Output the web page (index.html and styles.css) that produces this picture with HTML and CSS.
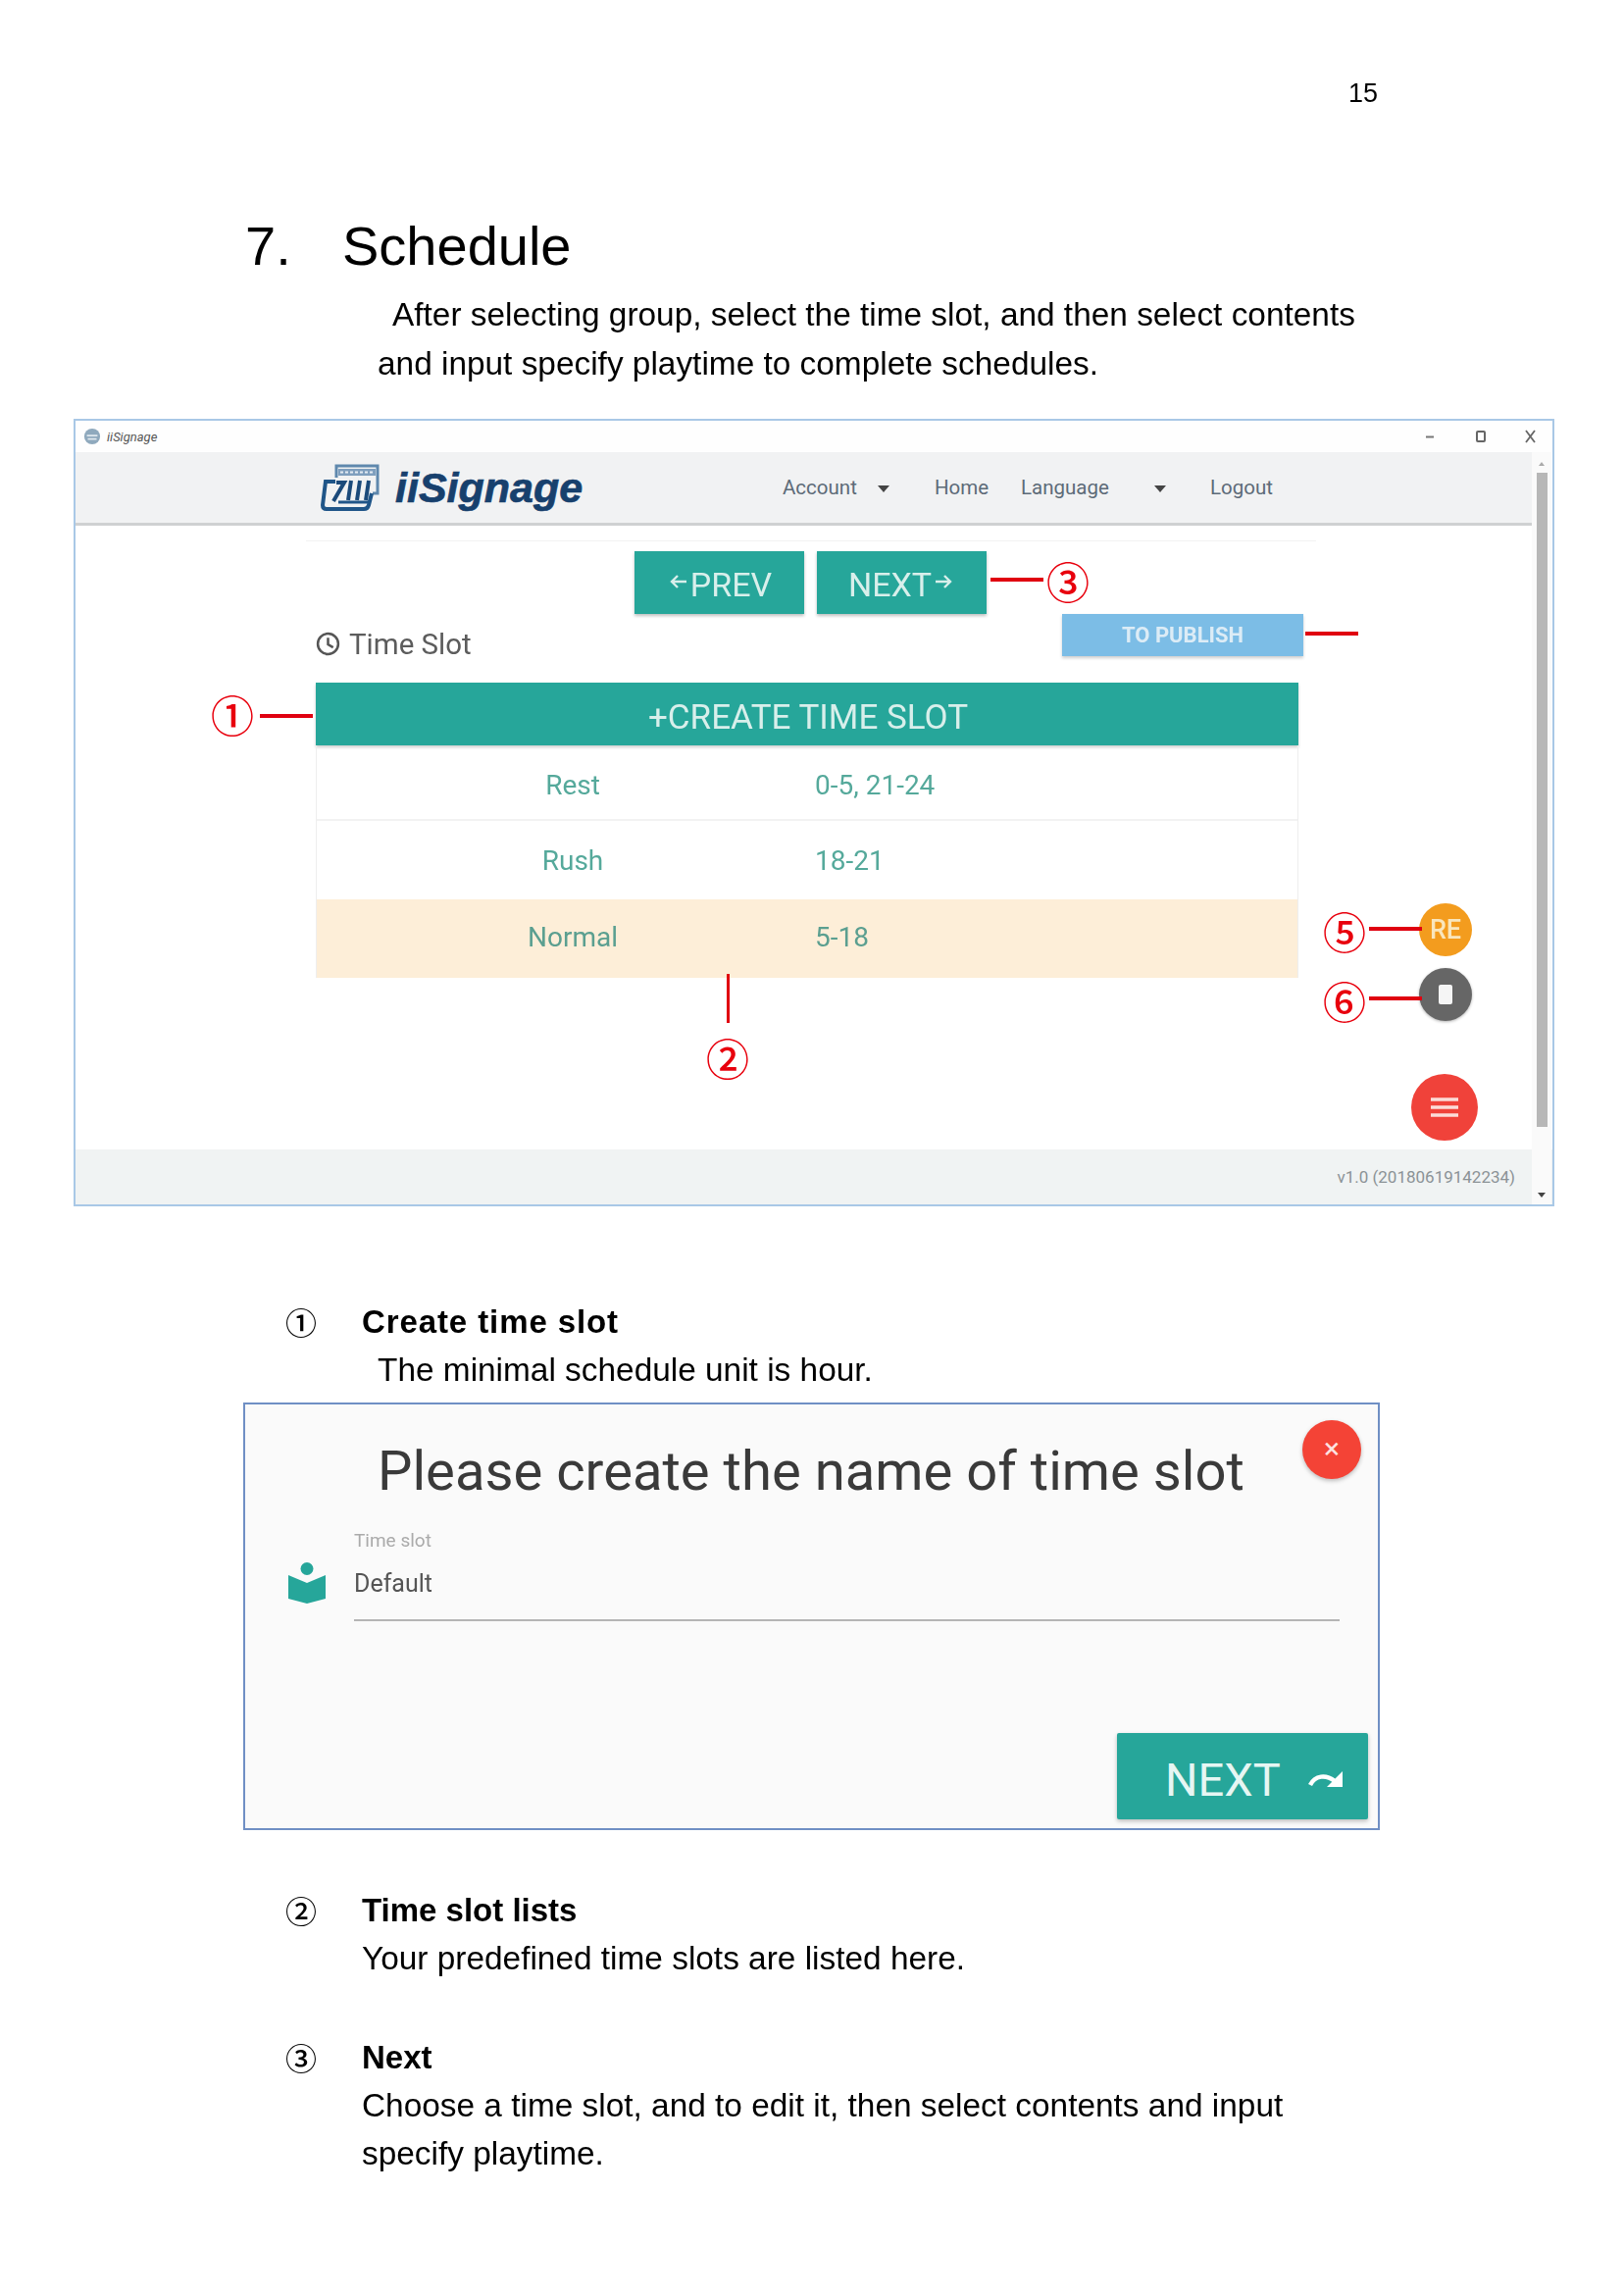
FILE: index.html
```html
<!DOCTYPE html>
<html lang="en">
<head>
<meta charset="utf-8">
<title>Schedule</title>
<link rel="stylesheet" href="styles.css">
</head>
<body>
<div class="page">
  <div class="pagenum">15</div>
  <h1 class="heading"><span class="heading-no">7.</span><span>Schedule</span></h1>
  <p class="intro"><span class="intro-first">After selecting group, select the time slot, and then select contents</span><br>and input specify playtime to complete schedules.</p>

  <div class="shot">
    <div class="app">
      <div class="titlebar">
        <svg class="tb-icon" viewBox="0 0 20 20"><circle cx="10" cy="10" r="9" fill="#8fa9bd"/><path d="M4 9h12M5 13h10" stroke="#dfe8ee" stroke-width="2"/></svg>
        <span class="tb-title">iiSignage</span>
        <div class="tb-controls">
          <svg class="tb-ctl" viewBox="0 0 16 16"><path d="M3 8.500h8" stroke="#777" stroke-width="2"/></svg>
          <svg class="tb-ctl" viewBox="0 0 16 16"><rect x="4" y="3" width="8" height="10" rx="1" fill="none" stroke="#666" stroke-width="2"/></svg>
          <svg class="tb-ctl" viewBox="0 0 16 16"><path d="M3 2l9 12M12 2L3 14" stroke="#666" stroke-width="1.800"/></svg>
        </div>
      </div>
      <div class="nav">
        <svg class="logo-mark" viewBox="0 0 60 48">
          <path d="M16 14V2h42v28h-5" fill="none" stroke="#5f88ad" stroke-width="3"/>
          <path d="M18 5h38v7H18z" fill="#7f9fbe"/>
          <path d="M20 8.500h34" stroke="#e3ebf2" stroke-width="2" stroke-dasharray="3 2"/>
          <path d="M15 18H5L2 42q0 4 4 4h38q4 0 5-4l3-12" fill="none" stroke="#1f5588" stroke-width="4"/>
          <path d="M13 38l11-19h-8M31 17l-3 20M40 17l-3 20M49 17l-3 20" fill="none" stroke="#1b4a7a" stroke-width="4"/>
          <path d="M18 39h30" stroke="#1f5588" stroke-width="3"/>
        </svg>
        <span class="logo-text">iiSignage</span>
        <div class="menu">
          <span class="m-account">Account</span><span class="caret c-account"></span>
          <span class="m-home">Home</span>
          <span class="m-lang">Language</span><span class="caret c-lang"></span>
          <span class="m-logout">Logout</span>
        </div>
      </div>
      <div class="main">
        <div class="hairline"></div>
        <div class="content">
          <div class="steps">
            <div class="btn"><svg class="arrow" viewBox="0 0 20 20"><path d="M18 10H3M9 4l-6 6 6 6" fill="none" stroke="#d8efeb" stroke-width="2.400"/></svg>PREV</div>
            <div class="btn">NEXT<svg class="arrow" viewBox="0 0 20 20"><path d="M2 10h15M11 4l6 6-6 6" fill="none" stroke="#d8efeb" stroke-width="2.400"/></svg></div>
          </div>
          <div class="toolbar">
            <div class="slot-title">
              <svg class="clock" viewBox="0 0 24 24"><circle cx="12" cy="12" r="10" fill="none" stroke="#555" stroke-width="2.400"/><path d="M12 6v6.500l5 3" fill="none" stroke="#555" stroke-width="2.400"/></svg>
              <span>Time Slot</span>
            </div>
            <div class="publish">TO PUBLISH</div>
          </div>
          <div class="create">+CREATE TIME SLOT</div>
          <div class="table">
            <div class="row row-a"><span class="cell-name">Rest</span><span>0-5, 21-24</span></div>
            <div class="row row-b"><span class="cell-name">Rush</span><span>18-21</span></div>
            <div class="row row-c"><span class="cell-name">Normal</span><span>5-18</span></div>
          </div>
        </div>
      </div>
      <div class="footer">v1.0 (20180619142234)</div>
    </div>

    <div class="scrollbar">
      <span class="sb-up"></span>
      <span class="sb-thumb"></span>
      <span class="sb-down"></span>
    </div>

    <div class="fab fab-re">RE</div>
    <div class="fab fab-stop"><span class="stop-mark"></span></div>
    <div class="fab fab-menu"><svg class="menu-mark" viewBox="0 0 28 20"><path d="M0 2h28M0 10h28M0 18h28" stroke="#fbdcd8" stroke-width="3.500"/></svg></div>

    <span class="mark mark-1">①</span><span class="line h line-1"></span>
    <span class="mark mark-2">②</span><span class="line v line-2"></span>
    <span class="mark mark-3">③</span><span class="line h line-3"></span>
    <span class="line h line-4"></span>
    <span class="mark mark-5">⑤</span><span class="line h line-5"></span>
    <span class="mark mark-6">⑥</span><span class="line h line-6"></span>
  </div>

  <div class="item item-first">
    <span class="item-no">①</span>
    <div class="item-body">
      <div class="item-title item-title-wide">Create time slot</div>
      <div class="item-text item-indent">The minimal schedule unit is hour.</div>
    </div>
  </div>

  <div class="dialog">
    <div class="dialog-title">Please create the name of time slot</div>
    <div class="close">×</div>
    <div class="field">
      <svg class="book" viewBox="0 0 38 42"><circle cx="19" cy="6.500" r="6.500" fill="#26a69a"/><path d="M0 13l19 8 19-8v24l-19 5-19-5z" fill="#26a69a"/></svg>
      <div class="field-box">
        <div class="field-label">Time slot</div>
        <div class="field-value">Default</div>
      </div>
    </div>
    <div class="dialog-next">NEXT<svg class="redo" viewBox="0 0 36 20"><path d="M2 16c5-10 16-11 25-4" fill="none" stroke="#fff" stroke-width="4.500"/><path d="M35 2v16H19z" fill="#fff"/></svg></div>
  </div>

  <div class="item item-second">
    <span class="item-no">②</span>
    <div class="item-body">
      <div class="item-title">Time slot lists</div>
      <div class="item-text">Your predefined time slots are listed here.</div>
    </div>
  </div>

  <div class="item item-third">
    <span class="item-no">③</span>
    <div class="item-body">
      <div class="item-title">Next</div>
      <div class="item-text">Choose a time slot, and to edit it, then select contents and input<br>specify playtime.</div>
    </div>
  </div>
</div>
</body>
</html>
```

FILE: styles.css
```css
* { box-sizing: border-box; }
html, body { margin: 0; padding: 0; background: #fff; }
body { font-family: "Liberation Sans", Arial, sans-serif; color: #000; }
.page { width: 1656px; height: 2340px; overflow: hidden; padding-top: 76px; }

.pagenum { height: 38px; line-height: 38px; font-size: 27px; text-align: right; padding-right: 251px; filter: blur(.3px); }

.heading { display: flex; margin: 99px 0 0 250px; font-size: 56px; line-height: 76px; font-weight: 400; filter: blur(.3px); }
.heading-no { width: 99px; }

.intro { margin: 7px 0 0 385px; font-size: 33.400px; line-height: 50px; filter: blur(.3px); }
.intro-first { margin-left: 15px; }

.shot { position: relative; width: 1510px; height: 803px; margin: 31px 0 0 75px; border: 2px solid #a9c8e6; background: #fff; font-family: Roboto, sans-serif; }
.app { display: flex; flex-direction: column; height: 100%; filter: blur(.7px); }

.titlebar { display: flex; align-items: center; height: 32px; flex: none; background: #fefefe; padding-left: 8px; }
.tb-icon { width: 18px; height: 18px; }
.tb-title { margin-left: 6px; font-size: 13px; font-style: italic; color: #555; }
.tb-controls { display: flex; margin-left: auto; gap: 35px; padding-right: 14px; }
.tb-ctl { width: 16px; height: 16px; }

.nav { position: relative; display: flex; align-items: center; height: 75px; flex: none; margin-right: 19px; padding-left: 250px; background: #f1f2f3; border-bottom: 3px solid #cfd1d2; }
.logo-mark { width: 60px; height: 48px; }
.logo-text { margin-left: 16px; font-family: "Liberation Sans", sans-serif; font-size: 43px; font-weight: 700; font-style: italic; color: #17406d; -webkit-text-stroke: .7px #17406d; }
.menu { position: absolute; top: 0; left: 0; right: 0; bottom: 0; font-size: 20.500px; color: #5d6b78; }
.menu span { position: absolute; top: 24px; }
.m-account { left: 721px; }
.m-home { left: 876px; }
.m-lang { left: 964px; }
.m-logout { left: 1157px; }
.menu .caret { top: 34px; width: 0; height: 0; border-left: 6px solid transparent; border-right: 6px solid transparent; border-top: 7px solid #444; }
.menu .c-account { left: 818px; }
.menu .c-lang { left: 1100px; }

.main { position: relative; flex: 1; min-height: 0; }
.hairline { position: absolute; top: 15px; left: 235px; width: 1030px; height: 1px; background: #f2f2f2; }
.content { padding: 26px 0 0 245px; width: 1247px; }
.steps { display: flex; gap: 13px; margin-left: 325px; height: 64px; }
.btn { display: flex; align-items: center; justify-content: center; width: 173px; height: 64px; padding-top: 4px; background: #26a69a; color: #d8efeb; font-size: 34px; box-shadow: 0 2px 3px rgba(0,0,0,.25); }
.arrow { width: 20px; height: 20px; margin: -6px 2px 0; }

.toolbar { display: flex; justify-content: space-between; align-items: flex-start; height: 70px; margin-right: -5px; }
.slot-title { display: flex; align-items: center; gap: 9px; height: 61px; font-size: 29.500px; color: #5c5c5c; }
.clock { width: 25px; height: 25px; }
.publish { width: 246px; height: 43px; line-height: 43px; text-align: center; background: #7cbde6; color: #dcecf6; font-size: 22px; font-weight: 700; box-shadow: 0 2px 3px rgba(0,0,0,.2); }

.create { height: 64px; padding-left: 2px; line-height: 72px; text-align: center; background: #26a69a; color: #d8efeb; font-size: 35px; box-shadow: 0 2px 3px rgba(0,0,0,.2); }
.table { border-left: 1px solid #eee; border-right: 1px solid #eee; }
.row { display: grid; grid-template-columns: 508px 1fr; align-items: center; font-size: 28px; color: #55a99b; }
.row-a { height: 77px; padding-top: 6px; border-bottom: 2px solid #f2f2f2; }
.row-b { height: 80px; }
.row-c { height: 80px; padding-bottom: 3px; background: #fdeed8; color: #5b9f90; }
.cell-name { padding-left: 14px; text-align: center; }

.footer { height: 56px; flex: none; margin-right: 0; padding: 18px 38px 0 0; text-align: right; background: #f0f3f3; font-size: 17px; color: #8b9296; }

.scrollbar { position: absolute; top: 32px; right: 1px; bottom: 0; width: 20px; display: flex; flex-direction: column; align-items: center; background: #fafafa; }
.sb-up { height: 0; margin-top: 10px; border-left: 3px solid transparent; border-right: 3px solid transparent; border-bottom: 4px solid #aaa; }
.sb-thumb { width: 11px; height: 667px; margin-top: 7px; background: #b7b7b7; }
.sb-down { margin-top: auto; margin-bottom: 7px; border-left: 4px solid transparent; border-right: 4px solid transparent; border-top: 5px solid #444; }

.fab { position: absolute; display: flex; align-items: center; justify-content: center; border-radius: 50%; }
.fab-re { left: 1370px; top: 492px; width: 54px; height: 54px; background: #f39c1e; color: #f9e6bd; font-family: Roboto, sans-serif; font-size: 27px; font-weight: 500; filter: blur(.6px); }
.fab-stop { left: 1370px; top: 558px; width: 54px; height: 54px; background: #666; filter: blur(.7px); box-shadow: 0 1px 3px rgba(0,0,0,.3); }
.stop-mark { width: 14px; height: 20px; border-radius: 2px; background: #f5f5f5; }
.fab-menu { left: 1362px; top: 666px; width: 68px; height: 68px; background: #f0423a; filter: blur(.7px); }
.menu-mark { width: 28px; height: 20px; }

.mark { position: absolute; width: 44px; height: 44px; line-height: 44px; text-align: center; font-family: "Noto Sans CJK JP", "DejaVu Sans", sans-serif; font-size: 44px; font-weight: 500; color: #e8000d; }
.line { position: absolute; background: #e00010; }
.line.h { height: 4px; width: 54px; }
.line.v { width: 3px; height: 50px; }
.mark-1 { left: 138px; top: 277px; }
.line-1 { left: 188px; top: 299px; }
.mark-2 { left: 643px; top: 627px; }
.line-2 { left: 664px; top: 564px; }
.mark-3 { left: 990px; top: 141px; }
.line-3 { left: 933px; top: 160px; }
.line-4 { left: 1254px; top: 215px; }
.mark-5 { left: 1272px; top: 498px; }
.line-5 { left: 1319px; top: 516px; }
.mark-6 { left: 1272px; top: 569px; }
.line-6 { left: 1319px; top: 587px; }

.item { display: grid; grid-template-columns: 78px 1fr; margin-left: 291px; filter: blur(.3px); }
.item-first { margin-top: 93px; }
.item-second { margin-top: 57px; }
.item-third { margin-top: 52px; }
.item-no { font-family: "Noto Sans CJK JP", "DejaVu Sans", sans-serif; font-size: 32px; font-weight: 500; line-height: 49px; }
.item-title { font-size: 33px; font-weight: 700; line-height: 49px; }
.item-title-wide { letter-spacing: .9px; }
.item-text { font-size: 33.400px; line-height: 49px; }
.item-indent { margin-left: 16px; }

.dialog { position: relative; width: 1159px; height: 436px; margin: 9px 0 0 248px; border: 2px solid #6f8fc4; background: #fafafa; font-family: Roboto, sans-serif; }
.dialog-title { padding: 33px 0 0 135px; font-size: 56.200px; line-height: 70px; color: #3a3a3a; filter: blur(.4px); }
.close { position: absolute; top: 16px; right: 17px; width: 60px; height: 60px; line-height: 58px; border-radius: 50%; text-align: center; background: #f44336; color: #fde3e1; font-size: 30px; box-shadow: 0 2px 4px rgba(0,0,0,.25); }
.field { display: flex; align-items: flex-end; margin: 25px 39px 0 44px; }
.book { width: 38px; height: 42px; margin-bottom: 18px; }
.field-box { flex: 1; margin-left: 29px; height: 93px; border-bottom: 2px solid #b5b5b5; filter: blur(.4px); }
.field-label { font-size: 19px; line-height: 22px; color: #aaa; }
.field-value { margin-top: 18px; font-size: 25px; line-height: 30px; color: #555; }
.dialog-next { position: absolute; right: 10px; bottom: 9px; width: 256px; height: 88px; display: flex; align-items: center; padding: 6px 0 0 49px; background: #26a69a; border-radius: 2px; color: #e6f6f3; font-size: 47px; box-shadow: 0 2px 4px rgba(0,0,0,.25); }
.redo { width: 36px; height: 20px; margin-left: 28px; }
```
